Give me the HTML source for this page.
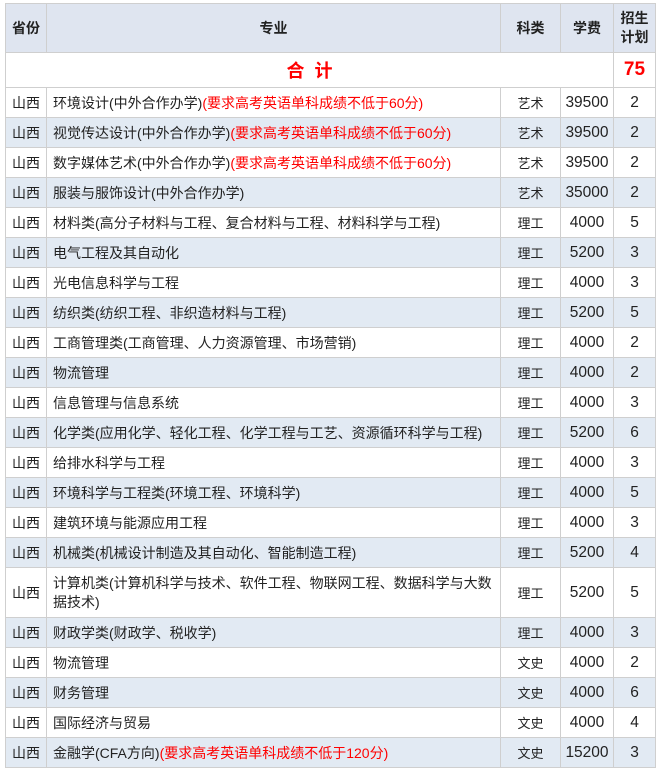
<!DOCTYPE html>
<html><head><meta charset="utf-8"><style>
body{margin:0;background:#fff;font-family:"Liberation Sans","Noto Sans CJK SC",sans-serif;font-size:14px;color:#222}
table{position:absolute;left:5px;top:3px;border-collapse:collapse;table-layout:fixed;width:650px}
td,th{border:1px solid #cfcfcf;padding:0;height:29px;text-align:center;vertical-align:middle}
td.m{text-align:left;padding-left:6px}
td.n{font-size:15.5px}
th{background:#dfe5f0;font-weight:bold;font-size:14px;height:48px}
tr.s td{background:#e2eaf3}
.r{color:#f00}
td.c{font-size:13px}
.tot td{height:34px}
</style></head><body>
<table>
<colgroup><col style="width:41px"><col style="width:454px"><col style="width:60px"><col style="width:53px"><col style="width:42px"></colgroup>
<tr><th>省份</th><th>专业</th><th>科类</th><th>学费</th><th style="line-height:19px">招生<br>计划</th></tr>
<tr class="tot"><td colspan="4" style="color:#f00;font-weight:bold;font-size:18px">合&nbsp;&nbsp;计</td><td style="color:#f00;font-weight:bold;font-size:19px">75</td></tr>
<tr><td>山西</td><td class="m">环境设计(中外合作办学)<span class="r">(要求高考英语单科成绩不低于60分)</span></td><td class="c">艺术</td><td class="n">39500</td><td class="n">2</td></tr>
<tr class="s"><td>山西</td><td class="m">视觉传达设计(中外合作办学)<span class="r">(要求高考英语单科成绩不低于60分)</span></td><td class="c">艺术</td><td class="n">39500</td><td class="n">2</td></tr>
<tr><td>山西</td><td class="m">数字媒体艺术(中外合作办学)<span class="r">(要求高考英语单科成绩不低于60分)</span></td><td class="c">艺术</td><td class="n">39500</td><td class="n">2</td></tr>
<tr class="s"><td>山西</td><td class="m">服装与服饰设计(中外合作办学)</td><td class="c">艺术</td><td class="n">35000</td><td class="n">2</td></tr>
<tr><td>山西</td><td class="m">材料类(高分子材料与工程、复合材料与工程、材料科学与工程)</td><td class="c">理工</td><td class="n">4000</td><td class="n">5</td></tr>
<tr class="s"><td>山西</td><td class="m">电气工程及其自动化</td><td class="c">理工</td><td class="n">5200</td><td class="n">3</td></tr>
<tr><td>山西</td><td class="m">光电信息科学与工程</td><td class="c">理工</td><td class="n">4000</td><td class="n">3</td></tr>
<tr class="s"><td>山西</td><td class="m">纺织类(纺织工程、非织造材料与工程)</td><td class="c">理工</td><td class="n">5200</td><td class="n">5</td></tr>
<tr><td>山西</td><td class="m">工商管理类(工商管理、人力资源管理、市场营销)</td><td class="c">理工</td><td class="n">4000</td><td class="n">2</td></tr>
<tr class="s"><td>山西</td><td class="m">物流管理</td><td class="c">理工</td><td class="n">4000</td><td class="n">2</td></tr>
<tr><td>山西</td><td class="m">信息管理与信息系统</td><td class="c">理工</td><td class="n">4000</td><td class="n">3</td></tr>
<tr class="s"><td>山西</td><td class="m">化学类(应用化学、轻化工程、化学工程与工艺、资源循环科学与工程)</td><td class="c">理工</td><td class="n">5200</td><td class="n">6</td></tr>
<tr><td>山西</td><td class="m">给排水科学与工程</td><td class="c">理工</td><td class="n">4000</td><td class="n">3</td></tr>
<tr class="s"><td>山西</td><td class="m">环境科学与工程类(环境工程、环境科学)</td><td class="c">理工</td><td class="n">4000</td><td class="n">5</td></tr>
<tr><td>山西</td><td class="m">建筑环境与能源应用工程</td><td class="c">理工</td><td class="n">4000</td><td class="n">3</td></tr>
<tr class="s"><td>山西</td><td class="m">机械类(机械设计制造及其自动化、智能制造工程)</td><td class="c">理工</td><td class="n">5200</td><td class="n">4</td></tr>
<tr><td style="height:49px">山西</td><td class="m" style="line-height:19px">计算机类(计算机科学与技术、软件工程、物联网工程、数据科学与大数据技术)</td><td class="c">理工</td><td class="n">5200</td><td class="n">5</td></tr>
<tr class="s"><td>山西</td><td class="m">财政学类(财政学、税收学)</td><td class="c">理工</td><td class="n">4000</td><td class="n">3</td></tr>
<tr><td>山西</td><td class="m">物流管理</td><td class="c">文史</td><td class="n">4000</td><td class="n">2</td></tr>
<tr class="s"><td>山西</td><td class="m">财务管理</td><td class="c">文史</td><td class="n">4000</td><td class="n">6</td></tr>
<tr><td>山西</td><td class="m">国际经济与贸易</td><td class="c">文史</td><td class="n">4000</td><td class="n">4</td></tr>
<tr class="s"><td>山西</td><td class="m">金融学(CFA方向)<span class="r">(要求高考英语单科成绩不低于120分)</span></td><td class="c">文史</td><td class="n">15200</td><td class="n">3</td></tr>
</table>
</body></html>
